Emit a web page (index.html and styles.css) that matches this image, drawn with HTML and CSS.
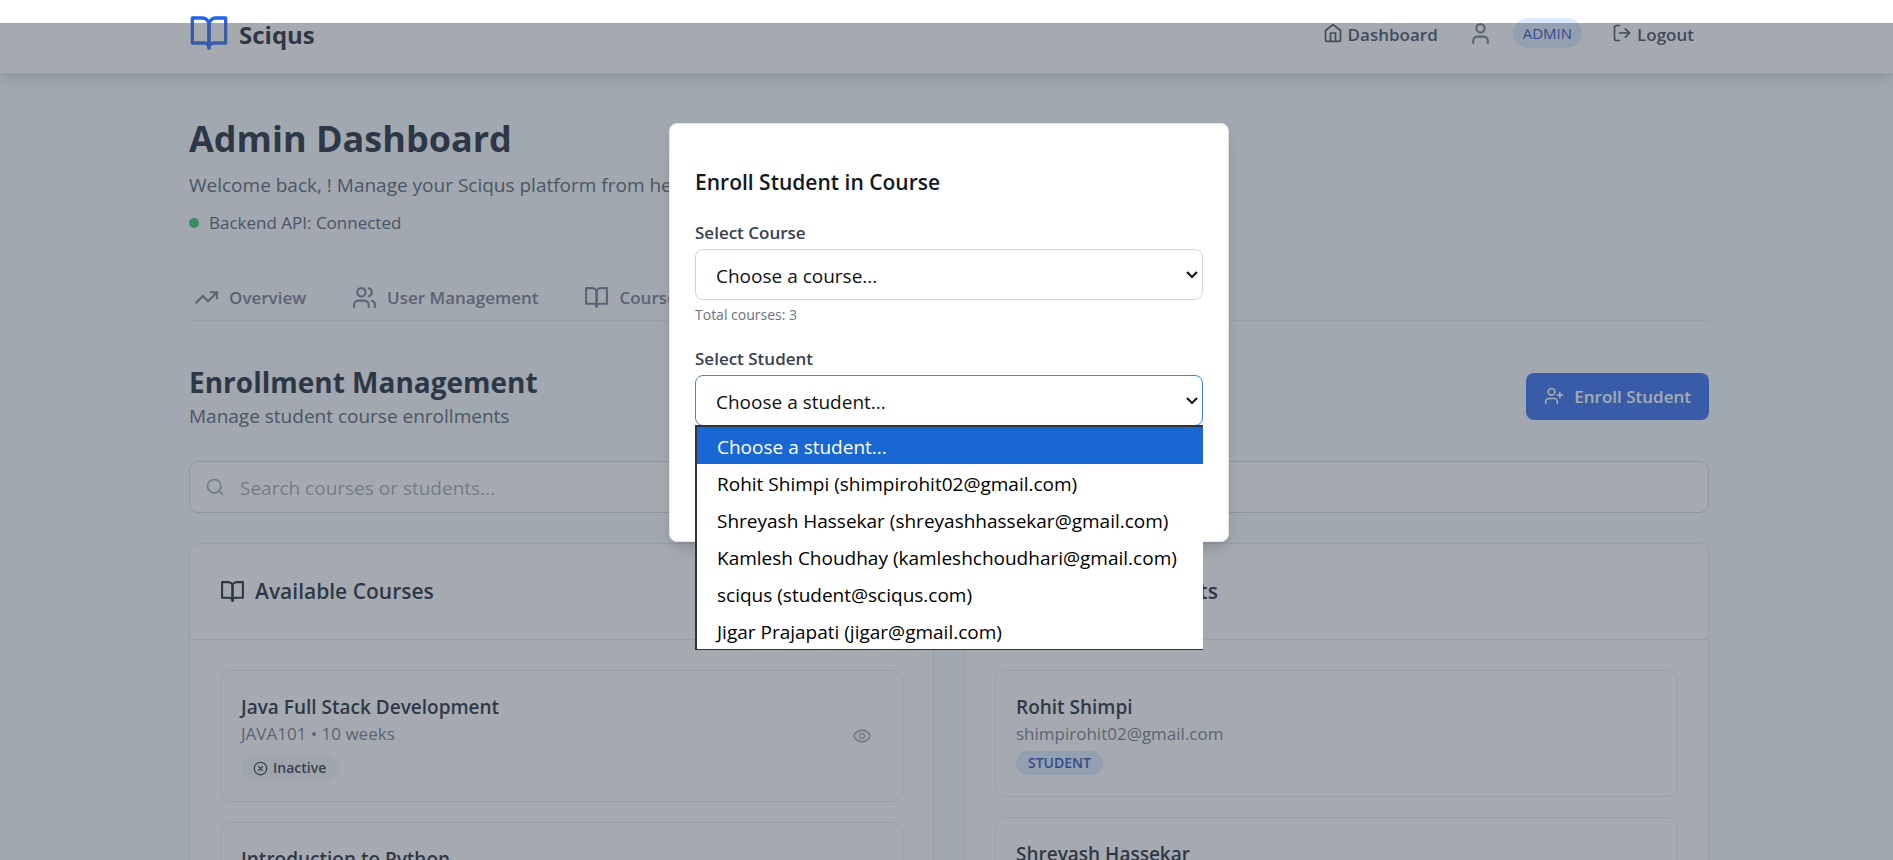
FILE: index.html
```html
<!DOCTYPE html>
<html lang="en">
<head>
<meta charset="utf-8">
<title>Sciqus – Admin Dashboard</title>
<link rel="stylesheet" href="styles.css">
</head>
<body>
<svg class="sprite" aria-hidden="true">
  <symbol id="book" viewBox="0 0 24 24"><path d="M2 3h6a4 4 0 0 1 4 4v14a3 3 0 0 0-3-3H2z"/><path d="M22 3h-6a4 4 0 0 0-4 4v14a3 3 0 0 1 3-3h7z"/></symbol>
  <symbol id="home" viewBox="0 0 24 24"><path d="m3 9 9-7 9 7v11a2 2 0 0 1-2 2H5a2 2 0 0 1-2-2z"/><path d="M9 22V12h6v10"/></symbol>
  <symbol id="user" viewBox="0 0 24 24"><path d="M19 21v-2a4 4 0 0 0-4-4H9a4 4 0 0 0-4 4v2"/><circle cx="12" cy="7" r="4"/></symbol>
  <symbol id="logout" viewBox="0 0 24 24"><path d="M9 21H5a2 2 0 0 1-2-2V5a2 2 0 0 1 2-2h4"/><path d="m16 17 5-5-5-5"/><path d="M21 12H9"/></symbol>
  <symbol id="trend" viewBox="0 0 24 24"><path d="m22 7-8.500 8.500-5-5L2 17"/><path d="M16 7h6v6"/></symbol>
  <symbol id="users" viewBox="0 0 24 24"><path d="M16 21v-2a4 4 0 0 0-4-4H6a4 4 0 0 0-4 4v2"/><circle cx="9" cy="7" r="4"/><path d="M22 21v-2a4 4 0 0 0-3-3.870"/><path d="M16 3.130a4 4 0 0 1 0 7.750"/></symbol>
  <symbol id="user-plus" viewBox="0 0 24 24"><path d="M16 21v-2a4 4 0 0 0-4-4H6a4 4 0 0 0-4 4v2"/><circle cx="9" cy="7" r="4"/><path d="M19 8v6M22 11h-6"/></symbol>
  <symbol id="search" viewBox="0 0 24 24"><circle cx="11" cy="11" r="8"/><path d="m21 21-4.300-4.300"/></symbol>
  <symbol id="eye" viewBox="0 0 24 24"><path d="M2 12s3-7 10-7 10 7 10 7-3 7-10 7-10-7-10-7Z"/><circle cx="12" cy="12" r="3"/></symbol>
  <symbol id="x-circle" viewBox="0 0 24 24"><circle cx="12" cy="12" r="10"/><path d="m15 9-6 6M9 9l6 6"/></symbol>
</svg>

<div class="page">
  <header class="topbar">
    <div class="container topbar-row">
      <a class="brand" href="#"><svg class="icon icon-xl"><use href="#book"/></svg><span class="nudge">Sciqus</span></a>
      <nav class="topnav">
        <a class="navlink" href="#"><svg class="icon icon-sm"><use href="#home"/></svg><span class="nudge">Dashboard</span></a>
        <div class="account"><svg class="icon icon-md"><use href="#user"/></svg><span class="role">ADMIN</span></div>
        <button class="navlink" type="button"><svg class="icon icon-sm"><use href="#logout"/></svg><span class="nudge">Logout</span></button>
      </nav>
    </div>
  </header>

  <main class="container main">
    <h1 class="title">Admin Dashboard</h1>
    <p class="lead">Welcome back, ! Manage your Sciqus platform from here.</p>
    <p class="status"><span class="dot"></span>Backend API: Connected</p>

    <nav class="tabs">
      <button class="tab" type="button"><svg class="icon icon-md"><use href="#trend"/></svg>Overview</button>
      <button class="tab" type="button"><svg class="icon icon-md"><use href="#users"/></svg>User Management</button>
      <button class="tab" type="button"><svg class="icon icon-md"><use href="#book"/></svg>Courses</button>
    </nav>

    <section class="section-head">
      <div>
        <h2 class="subtitle">Enrollment Management</h2>
        <p class="lead">Manage student course enrollments</p>
      </div>
      <button class="primary" type="button"><svg class="icon icon-sm"><use href="#user-plus"/></svg>Enroll Student</button>
    </section>

    <label class="search">
      <svg class="icon icon-sm"><use href="#search"/></svg>
      <input class="search-input" type="text" placeholder="Search courses or students..." aria-label="Search courses or students">
    </label>

    <div class="columns">
      <section class="card">
        <h3 class="card-head"><svg class="icon icon-md"><use href="#book"/></svg>Available Courses</h3>
        <div class="card-body">
          <article class="item item-course">
            <div>
              <h4 class="item-title">Java Full Stack Development</h4>
              <p class="item-meta">JAVA101 • 10 weeks</p>
              <span class="badge badge-gray"><svg class="icon icon-xs"><use href="#x-circle"/></svg>Inactive</span>
            </div>
            <button class="view" type="button" aria-label="View course"><svg class="icon icon-sm"><use href="#eye"/></svg></button>
          </article>
          <article class="item item-course">
            <div>
              <h4 class="item-title">Introduction to Python</h4>
            </div>
          </article>
        </div>
      </section>
      <section class="card">
        <h3 class="card-head"><svg class="icon icon-md"><use href="#users"/></svg>Available Students</h3>
        <div class="card-body">
          <article class="item">
            <div>
              <h4 class="item-title">Rohit Shimpi</h4>
              <p class="item-meta">shimpirohit02@gmail.com</p>
              <span class="badge badge-blue">STUDENT</span>
            </div>
          </article>
          <article class="item">
            <div>
              <h4 class="item-title">Shreyash Hassekar</h4>
            </div>
          </article>
        </div>
      </section>
    </div>
  </main>
</div>

<div class="overlay">
  <form class="modal" role="dialog" aria-labelledby="modal-title">
    <h3 class="modal-title" id="modal-title">Enroll Student in Course</h3>
    <div class="field">
      <label class="label" for="course">Select Course</label>
      <div class="control">
        <select class="select" id="course"><option>Choose a course...</option></select>
        <svg class="chevron" viewBox="0 0 12 8"><path d="m1 1 5 5 5-5"/></svg>
      </div>
      <p class="hint">Total courses: 3</p>
    </div>
    <div class="field">
      <label class="label" for="student">Select Student</label>
      <div class="control">
        <select class="select select-open" id="student"><option>Choose a student...</option></select>
        <svg class="chevron" viewBox="0 0 12 8"><path d="m1 1 5 5 5-5"/></svg>
        <ul class="options" role="listbox">
          <li class="option option-active" role="option" aria-selected="true">Choose a student...</li>
          <li class="option" role="option">Rohit Shimpi (shimpirohit02@gmail.com)</li>
          <li class="option" role="option">Shreyash Hassekar (shreyashhassekar@gmail.com)</li>
          <li class="option" role="option">Kamlesh Choudhay (kamleshchoudhari@gmail.com)</li>
          <li class="option" role="option">sciqus (student@sciqus.com)</li>
          <li class="option" role="option">Jigar Prajapati (jigar@gmail.com)</li>
        </ul>
      </div>
    </div>
  </form>
</div>
</body>
</html>
```
FILE: styles.css
```css
* { box-sizing: border-box; margin: 0; padding: 0; }

html, body { height: 100%; overflow: hidden; }

body {
  background: #f7fafb;
  color: #111827;
  font-family: "Segoe UI", "Open Sans", "Noto Sans", sans-serif;
  font-size: 19px;
  line-height: 30px;
}

button, input, select { font: inherit; color: inherit; border: 0; background: none; }
a { color: inherit; text-decoration: none; }
ul { list-style: none; }

.sprite { position: absolute; width: 0; height: 0; }

.icon { fill: none; stroke: currentColor; stroke-width: 2; stroke-linecap: round; stroke-linejoin: round; flex: none; }
.icon-xs { width: 15px; height: 15px; }
.icon-sm { width: 20px; height: 20px; }
.icon-md { width: 25px; height: 25px; }
.icon-xl { width: 40px; height: 40px; }

.page { height: 100%; overflow: hidden; padding-left: 5px; }
.container { max-width: 1600px; margin: 0 auto; padding: 0 40px; }

.topbar { margin-top: -7px; background: #fff; border-bottom: 1px solid #e5e7eb; box-shadow: 0 12px 18px -4px rgba(0, 0, 0, .1), 0 5px 8px -3px rgba(0, 0, 0, .1); margin-left: -5px; padding-left: 5px; }
.topbar-row { display: flex; justify-content: space-between; align-items: center; height: 80px; }
.brand { display: flex; align-items: center; gap: 10px; font-size: 24px; font-weight: 700; }
.brand .icon { color: #2563eb; }
.topnav { display: flex; align-items: center; gap: 30px; padding-right: 15px; }
.navlink { display: flex; align-items: center; gap: 5px; font-size: 17px; font-weight: 600; color: #374151; }
.nudge { padding-top: 3px; }
.account { display: flex; align-items: center; gap: 20px; color: #6b7280; }
.role { padding: 3px 10px; border-radius: 20px; background: #dbeafe; color: #1e40af; font-size: 15px; line-height: 24px; }

.main { padding-top: 40px; }
.title { font-size: 36px; line-height: 50px; font-weight: 700; }
.lead { color: #4b5563; margin-top: 6px; }
.status { display: flex; align-items: center; gap: 10px; margin-top: 10px; font-size: 17px; line-height: 25px; color: #4b5563; }
.dot { width: 10px; height: 10px; border-radius: 50%; background: #22c55e; }

.tabs { display: flex; gap: 36px; margin-top: 40px; border-bottom: 1px solid #e5e7eb; }
.tab { display: flex; align-items: center; gap: 10px; padding: 10px 5px; font-size: 17px; line-height: 25px; font-weight: 600; color: #6b7280; }

.section-head { display: flex; justify-content: space-between; align-items: center; margin-top: 40px; }
.section-head .lead { margin-top: 0; }
.subtitle { padding-top: 2px; font-size: 28px; line-height: 38px; font-weight: 700; }
.primary { display: flex; align-items: center; gap: 10px; padding: 11px 18px; border-radius: 8px; background: #2563eb; color: #fff; font-size: 17px; line-height: 25px; font-weight: 600; }

.search { display: flex; align-items: center; gap: 15px; margin-top: 30px; padding: 0 15px; border: 1px solid #d1d5db; border-radius: 10px; background: #fff; color: #9ca3af; }
.search-input { flex: 1; padding: 12px 0 10px; height: 50px; outline: 0; }
.search-input::placeholder { color: #9ca3af; opacity: 1; }

.columns { display: grid; grid-template-columns: 1fr 1fr; gap: 30px; margin-top: 30px; }
.card { border: 1px solid #e5e7eb; border-radius: 10px; background: #fff; }
.card-head { display: flex; align-items: center; gap: 10px; padding: 30px; border-bottom: 1px solid #e5e7eb; font-size: 21px; line-height: 35px; font-weight: 600; }
.card-body { display: flex; flex-direction: column; gap: 20px; padding: 30px; }
.item { display: flex; justify-content: space-between; align-items: center; padding: 20px; border: 1px solid #e5e7eb; border-radius: 10px; min-height: 127px; }
.item > div { align-self: flex-start; }
.item-course { min-height: 132px; }
.item-title { padding-top: 2px; font-size: 19px; line-height: 28px; font-weight: 600; }
.item-meta { font-size: 17px; line-height: 25px; color: #6b7280; }
.badge { display: flex; width: fit-content; align-items: center; gap: 5px; padding: 2px 12px; border-radius: 20px; font-size: 14px; line-height: 20px; font-weight: 600; }
.badge-gray { background: #f3f4f6; color: #1f2937; margin-top: 10px; }
.badge-blue { background: #dbeafe; color: #1e40af; margin-top: 5px; }
.view { display: flex; padding: 10px; color: #9ca3af; }

.overlay { position: absolute; top: 23px; left: 0; right: 0; bottom: 0; padding-left: 5px; background: rgba(75, 85, 99, .5); }
.modal { width: 560px; min-height: 419px; margin: 100px auto 0; padding: 40px 25px 25px; border: 1px solid #e5e7eb; border-radius: 8px; background: #fff; box-shadow: 0 12px 18px -4px rgba(0, 0, 0, .1), 0 5px 8px -3px rgba(0, 0, 0, .1); }
.modal-title { padding-top: 1px; font-size: 21px; line-height: 34px; font-weight: 600; }
.field { margin-top: 20px; }
.label { display: block; padding-top: 1px; font-size: 17px; line-height: 25px; font-weight: 600; color: #374151; }
.control { position: relative; margin-top: 4px; }
.select { appearance: none; display: block; width: 100%; height: 51px; padding: 2px 20px 0; border: 1px solid #d1d5db; border-radius: 8px; background: #fff; color: #111; }
.select-open { border-color: #3b82f6; }
.chevron { position: absolute; right: 5px; top: 22px; width: 12px; height: 8px; fill: none; stroke: #111; stroke-width: 2; }
.hint { margin-top: 5px; font-size: 14px; line-height: 20px; color: #6b7280; }
.options { position: absolute; top: 50px; left: 0; right: 0; border: solid #333; border-width: 2px 0 1px 2px; background: #fff; color: #000; }
.option { padding: 3px 20px 0; line-height: 34px; white-space: nowrap; }
.option-active { background: #1967d2; color: #fff; }
```
